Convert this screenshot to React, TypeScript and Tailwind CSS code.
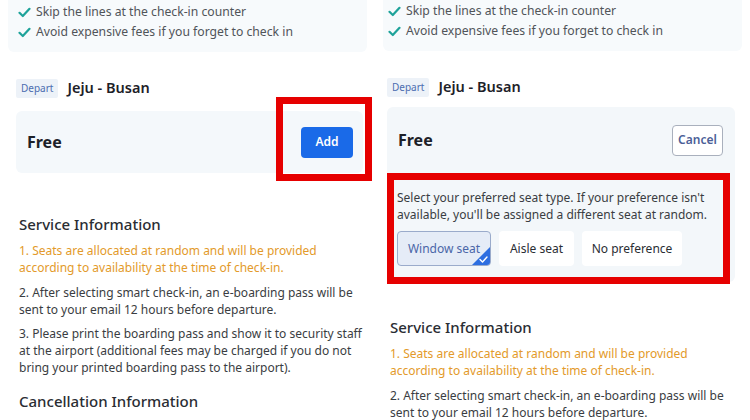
import React from "react";

const Check = () => (
  <svg width="13" height="11" viewBox="0 0 13 11" className="shrink-0">
    <path d="M1.5 5.8 L4.8 9 L11.5 1.8" fill="none" stroke="#1fa39a" strokeWidth="2.2" strokeLinecap="round" strokeLinejoin="round" />
  </svg>
);

const TopBox = ({ pl }: { pl: string }) => (
  <div className={`mx-[8px] h-[54px] bg-[#f7fafc] rounded-b-md pt-[4px] ${pl}`}>
    <div className="flex items-center gap-[5px] h-[20px] text-[12.2px] text-[#505459]">
      <Check />
      <span>Skip the lines at the check-in counter</span>
    </div>
    <div className="flex items-center gap-[5px] h-[20px] text-[12.2px] text-[#505459]">
      <Check />
      <span>Avoid expensive fees if you forget to check in</span>
    </div>
  </div>
);

const DepartRow = () => (
  <div className="flex items-center gap-[9px] h-[20px]">
    <span className="bg-[#edf2f8] text-[#4c6db0] text-[10px] px-[5px] h-[19px] leading-[19px] rounded-[2px]">Depart</span>
    <span className="text-[14.5px] font-semibold text-[#1d2128]">Jeju - Busan</span>
  </div>
);

const ServiceInfo = ({ full }: { full: boolean }) => (
  <div className="text-[12px] leading-[17px]">
    <div className="text-[15px] leading-[20px] text-[#2a2d33] font-medium mb-[8px]">Service Information</div>
    <div className="text-[#e39a2a]">
      1. Seats are allocated at random and will be provided<br />according to availability at the time of check-in.
    </div>
    <div className="text-[#3a3d42] mt-[8px]">
      2. After selecting smart check-in, an e-boarding pass will be<br />sent to your email 12 hours before departure.
    </div>
    {full && (
      <>
        <div className="text-[#3a3d42] mt-[7px]">
          3. Please print the boarding pass and show it to security staff<br />at the airport (additional fees may be charged if you do not<br />bring your printed boarding pass to the airport).
        </div>
        <div className="text-[15px] leading-[20px] text-[#2a2d33] font-medium mt-[15px]">Cancellation Information</div>
      </>
    )}
  </div>
);

export default function App() {
  return (
    <div className="w-[750px] h-[420px] overflow-hidden bg-white flex" style={{ fontFamily: '"Noto Sans", "Open Sans", sans-serif' }}>
      {/* Left */}
      <div className="relative w-[375px] h-full">
        <div className="-mt-[2px]">
          <TopBox pl="pl-[10px]" />
        </div>
        <div className="pl-[16px] mt-[26px]">
          <DepartRow />
        </div>
        <div className="ml-[16px] mr-[12px] mt-[13px] h-[62px] bg-[#f4f8fb] rounded-md flex items-center justify-between pl-[11px] pr-[10px]">
          <span className="text-[16px] font-bold text-[#1d2128]">Free</span>
          <button className="w-[52px] h-[31px] bg-[#1a6ae8] rounded-[4px] text-white text-[12px] font-semibold">Add</button>
        </div>
        <div className="pl-[19px] mt-[41px]">
          <ServiceInfo full />
        </div>
        <div className="absolute left-[276px] top-[97px] w-[96px] h-[84px] border-[7px] border-[#e60000]" />
      </div>
      {/* Right */}
      <div className="relative w-[375px] h-full">
        <div className="-mt-[3px]">
          <TopBox pl="pl-[5px]" />
        </div>
        <div className="pl-[12px] mt-[26px]">
          <DepartRow />
        </div>
        <div className="ml-[12px] mr-[15px] mt-[10px] bg-[#f3f7fa] rounded-md pb-[6px]">
          <div className="h-[66px] flex items-center justify-between pl-[11px] pr-[12px]">
            <span className="text-[16px] font-bold text-[#1d2128]">Free</span>
            <button className="w-[51px] h-[31px] bg-white border border-[#a9b0bd] rounded-[4px] text-[#4c5f98] text-[12px] font-semibold">Cancel</button>
          </div>
          <div className="pl-[10px] pt-[16px]">
            <div className="text-[12px] leading-[17px] text-[#3a3d42]">
              Select your preferred seat type. If your preference isn't<br />available, you'll be assigned a different seat at random.
            </div>
            <div className="flex gap-[8px] mt-[8px]">
              <div className="relative w-[94px] h-[35px] bg-[#e5ecf7] border border-[#9aabcb] rounded-[4px] flex items-center justify-center text-[12px] text-[#4a66a8] overflow-hidden">
                Window seat
                <svg className="absolute right-0 bottom-0" width="18" height="18" viewBox="0 0 18 18">
                  <path d="M18 0 L18 18 L0 18 Z" fill="#2d6ee0" />
                  <path d="M8 12.5 L10.5 15 L15 10" fill="none" stroke="white" strokeWidth="1.4" strokeLinecap="round" strokeLinejoin="round" />
                </svg>
              </div>
              <div className="w-[75px] h-[35px] bg-white rounded-[4px] flex items-center justify-center text-[12px] text-[#2a2d33]">Aisle seat</div>
              <div className="w-[100px] h-[35px] bg-white rounded-[4px] flex items-center justify-center text-[12px] text-[#2a2d33]">No preference</div>
            </div>
          </div>
          <div className="h-[10px]" />
        </div>
        <div className="pl-[15px] mt-[35px]">
          <ServiceInfo full={false} />
        </div>
        <div className="absolute left-[12px] top-[173px] w-[343px] h-[111px] border-[7px] border-[#e60000]" />
      </div>
    </div>
  );
}
